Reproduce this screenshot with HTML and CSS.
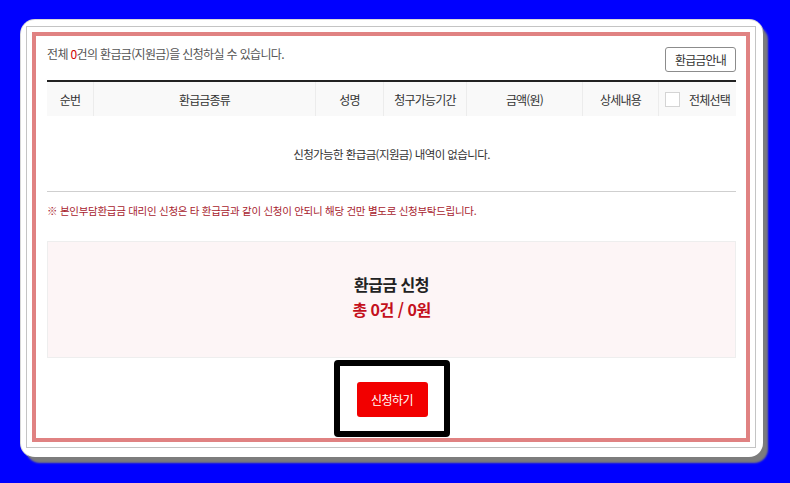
FILE: index.html
```html
<!DOCTYPE html>
<html lang="ko">
<head>
  <meta charset="UTF-8" />
  <meta name="viewport" content="width=device-width, initial-scale=1" />
  <title>환급금 신청</title>
  <link rel="stylesheet" href="styles.css">
</head>
<body>
  <div class="card">
    <div class="frame">
      <div class="panel">
        <div class="top">
          <p class="count">전체 <em>0</em>건의 환급금(지원금)을 신청하실 수 있습니다.</p>
          <button class="guide">환급금안내</button>
        </div>

        <div class="list">
          <div class="list-head">
            <span>순번</span>
            <span>환급금종류</span>
            <span>성명</span>
            <span>청구가능기간</span>
            <span>금액(원)</span>
            <span>상세내용</span>
            <span class="all"><i class="check"></i>전체선택</span>
          </div>
          <div class="empty">신청가능한 환급금(지원금) 내역이 없습니다.</div>
        </div>

        <p class="notice">※ 본인부담환급금 대리인 신청은 타 환급금과 같이 신청이 안되니 해당 건만 별도로 신청부탁드립니다.</p>

        <!-- 신청 합계 -->
        <div class="summary">
          <strong>환급금 신청</strong>
          <strong class="total">총 0건 / 0원</strong>
        </div>

        <div class="submit-wrap">
          <button class="submit">신청하기</button>
        </div>
      </div>
    </div>
  </div>
</body>
</html>
```

FILE: styles.css
```css
*, *::before, *::after { box-sizing: border-box; }
body {
  margin: 0;
  padding: 20px 0 0 21px;
  background: #0000ff;
  font-family: 'Noto Sans CJK KR', 'Noto Sans', sans-serif;
  color: #333;
  min-height: 100vh;
}
.card {
  width: 742px;
  height: 437px;
  background: #fff;
  border-radius: 14px;
  padding: 6px 7px 9px 5px;
  box-shadow: 5px 6px 2px #7c7c7c, 0 0 0 1px #d8d8d8;
}
.frame {
  border: 1px solid #c4c4c4;
  padding: 5px;
  height: 100%;
}
.panel {
  border: 4px solid #e08282;
  height: 100%;
  padding: 11px 10px 0 11px;
}
.top {
  display: flex;
  justify-content: space-between;
  align-items: flex-start;
}
.count {
  margin: 0;
  font-size: 12px;
  line-height: 14px;
  letter-spacing: -0.65px;
  color: #555;
}
.count em {
  font-style: normal;
  color: #d00000;
}
.guide {
  width: 71px;
  height: 25px;
  padding: 0;
  background: #fff;
  border: 1px solid #8c8c8c;
  border-radius: 3px;
  font-family: inherit;
  font-size: 12px;
  letter-spacing: -0.8px;
  color: #333;
}

.list {
  margin-top: 8px;
  border-top: 2px solid #222;
  border-bottom: 1px solid #cfcfcf;
}
.list-head {
  display: grid;
  grid-template-columns: 46px 222px 68px 83px 116px 76px 1fr;
  height: 34px;
  background: #f9f9f9;
}
.list-head span {
  display: flex;
  align-items: center;
  justify-content: center;
  font-size: 12px;
  letter-spacing: -0.8px;
  color: #333;
  border-left: 1px solid #ececec;
}
.list-head span:first-child {
  border-left: none;
}
.check {
  width: 15px;
  height: 15px;
  margin-right: 9px;
  background: #fff;
  border: 1px solid #d4d4d4;
}
.empty {
  height: 75px;
  display: flex;
  align-items: center;
  justify-content: center;
  font-size: 11.5px;
  letter-spacing: -0.6px;
  color: #333;
}

.notice {
  margin: 12px 0 0;
  font-size: 10.5px;
  line-height: 14px;
  letter-spacing: -0.28px;
  color: #a8232e;
}

.summary {
  margin-top: 23px;
  height: 117px;
  background: #fdf5f6;
  border: 1px solid #eee;
  display: flex;
  flex-direction: column;
  align-items: center;
  justify-content: center;
  gap: 3px;
  padding-bottom: 6px;
}
.summary strong {
  font-size: 16px;
  line-height: 22px;
  letter-spacing: -0.5px;
  color: #222;
}
.summary .total {
  color: #c4101c;
}

.submit-wrap {
  width: 116px;
  margin: 2px auto 0;
  border: 6px solid #000;
  border-radius: 4px;
  padding: 16px 16px 14px 17px;
}
.submit {
  display: block;
  width: 71px;
  height: 35px;
  padding: 0;
  background: #f20000;
  border: none;
  border-radius: 3px;
  font-family: inherit;
  font-size: 12px;
  letter-spacing: -0.6px;
  color: #fff;
}
```
